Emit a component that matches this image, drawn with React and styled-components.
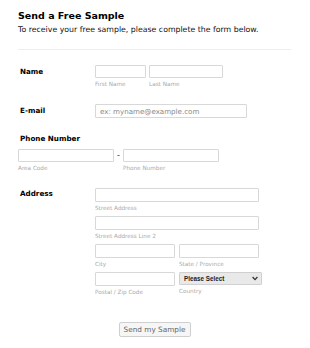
import React from 'react';
import styled, { createGlobalStyle } from 'styled-components';

const GlobalStyle = createGlobalStyle`
	html, body {
		margin: 0;
		padding: 0;
		background: #fff;
	}
	body {
		font-family: 'DejaVu Sans', Verdana, sans-serif;
		color: #000;
	}
	* {
		box-sizing: border-box;
	}
`;

const Page = styled.div`
	width: 310px;
	padding: 9px 19px 0 18px;
`;

const Title = styled.h2`
	margin: 0;
	font-size: 9.5px;
	line-height: 13px;
	font-weight: bold;
`;

const Subtitle = styled.p`
	margin: 2px 0 0;
	font-size: 7.8px;
	line-height: 11px;
	color: #111;
`;

const Divider = styled.hr`
	margin: 14px 0 15px;
	border: 0;
	border-top: 1px solid #eee;
`;

const Row = styled.div`
	display: flex;
	align-items: flex-start;
	margin-top: ${(p) => p.$top ?? 0}px;
	margin-bottom: ${(p) => p.$gap ?? 0}px;
`;

const Label = styled.div`
	width: 77px;
	flex: none;
	padding: ${(p) => p.$top ?? 3}px 0 0 2px;
	font-size: 7.2px;
	line-height: 10px;
	font-weight: bold;
`;

const StackedLabel = styled(Label)`
	width: auto;
	padding: 0 0 0 2px;
	margin-bottom: 5px;
`;

const Fields = styled.div`
	display: flex;
	flex-direction: column;
	gap: ${(p) => p.$gap ?? 0}px;
`;

const Line = styled.div`
	display: flex;
	align-items: flex-start;
	gap: ${(p) => p.$gap ?? 3}px;
`;

const Field = styled.div`
	display: flex;
	flex-direction: column;
	width: ${(p) => p.$w}px;
	flex: none;
	position: relative;
`;

const Input = styled.input`
	width: 100%;
	height: ${(p) => p.$h ?? 13}px;
	margin: 0;
	padding: 0 4px;
	border: 1px solid #d8d8d8;
	border-radius: 1px;
	background: #fff;
	font-family: 'DejaVu Sans', Verdana, sans-serif;
	font-size: 7.1px;
	color: #333;
	&::placeholder {
		color: #888;
	}
`;

const SubLabel = styled.span`
	margin-top: 3px;
	font-size: 5.7px;
	line-height: 7px;
	color: #aaa;
`;

const Dash = styled.span`
	width: 9px;
	flex: none;
	padding-top: 3px;
	text-align: center;
	font-size: 8px;
	line-height: 8px;
	color: #333;
`;

const Select = styled.select`
	appearance: none;
	width: 100%;
	height: 13px;
	margin: 0;
	padding: 0 4px;
	border: 1px solid #d0d0d0;
	border-radius: 1px;
	background: #e9e9e9;
	font-family: 'Liberation Sans', Arial, sans-serif;
	font-size: 6.3px;
	font-weight: bold;
	color: #222;
`;

const Chevron = styled.svg`
	position: absolute;
	right: 4px;
	top: 4px;
	width: 6px;
	height: 5px;
	pointer-events: none;
`;

const Footer = styled.div`
	display: flex;
	justify-content: center;
	padding-top: 26px;
`;

const Button = styled.button`
	width: 72px;
	height: 15px;
	padding: 0;
	border: 1px solid #cfcfcf;
	border-radius: 2px;
	background: #f6f6f6;
	font-family: 'DejaVu Sans', Verdana, sans-serif;
	font-size: 7.3px;
	color: #666;
`;

const Labeled = ({ w, label, children }) => (
	<Field $w={w}>
		{children}
		{label && <SubLabel>{label}</SubLabel>}
	</Field>
);

export default function App() {
	return (
		<>
			<GlobalStyle />
			<Page>
				<Title>Send a Free Sample</Title>
				<Subtitle>To receive your free sample, please complete the form below.</Subtitle>
				<Divider />

				<Row $gap={16}>
					<Label $top={2}>Name</Label>
					<Line>
						<Labeled w={51} label="First Name">
							<Input />
						</Labeled>
						<Labeled w={74} label="Last Name">
							<Input />
						</Labeled>
					</Line>
				</Row>

				<Row $gap={16}>
					<Label $top={2}>E-mail</Label>
					<Labeled w={152}>
						<Input $h={14} placeholder="ex: myname@example.com" />
					</Labeled>
				</Row>

				<StackedLabel>Phone Number</StackedLabel>
				<Line $gap={0}>
					<Labeled w={96} label="Area Code">
						<Input />
					</Labeled>
					<Dash>-</Dash>
					<Labeled w={96} label="Phone Number">
						<Input />
					</Labeled>
				</Line>

				<Row $top={16}>
					<Label $top={1}>Address</Label>
					<Fields $gap={4}>
						<Labeled w={164} label="Street Address">
							<Input $h={14} />
						</Labeled>
						<Labeled w={164} label="Street Address Line 2">
							<Input $h={14} />
						</Labeled>
						<Line $gap={4}>
							<Labeled w={80} label="City">
								<Input $h={14} />
							</Labeled>
							<Labeled w={80} label="State / Province">
								<Input $h={14} />
							</Labeled>
						</Line>
						<Line $gap={4}>
							<Labeled w={80} label="Postal / Zip Code">
								<Input $h={14} />
							</Labeled>
							<Labeled w={83} label="Country">
								<Select defaultValue="">
									<option value="">Please Select</option>
								</Select>
								<Chevron viewBox="0 0 6 5">
									<path d="M0.6 1 L3 3.6 L5.4 1" fill="none" stroke="#333" strokeWidth="1.3" />
								</Chevron>
							</Labeled>
						</Line>
					</Fields>
				</Row>

				<Footer>
					<Button>Send my Sample</Button>
				</Footer>
			</Page>
		</>
	);
}
